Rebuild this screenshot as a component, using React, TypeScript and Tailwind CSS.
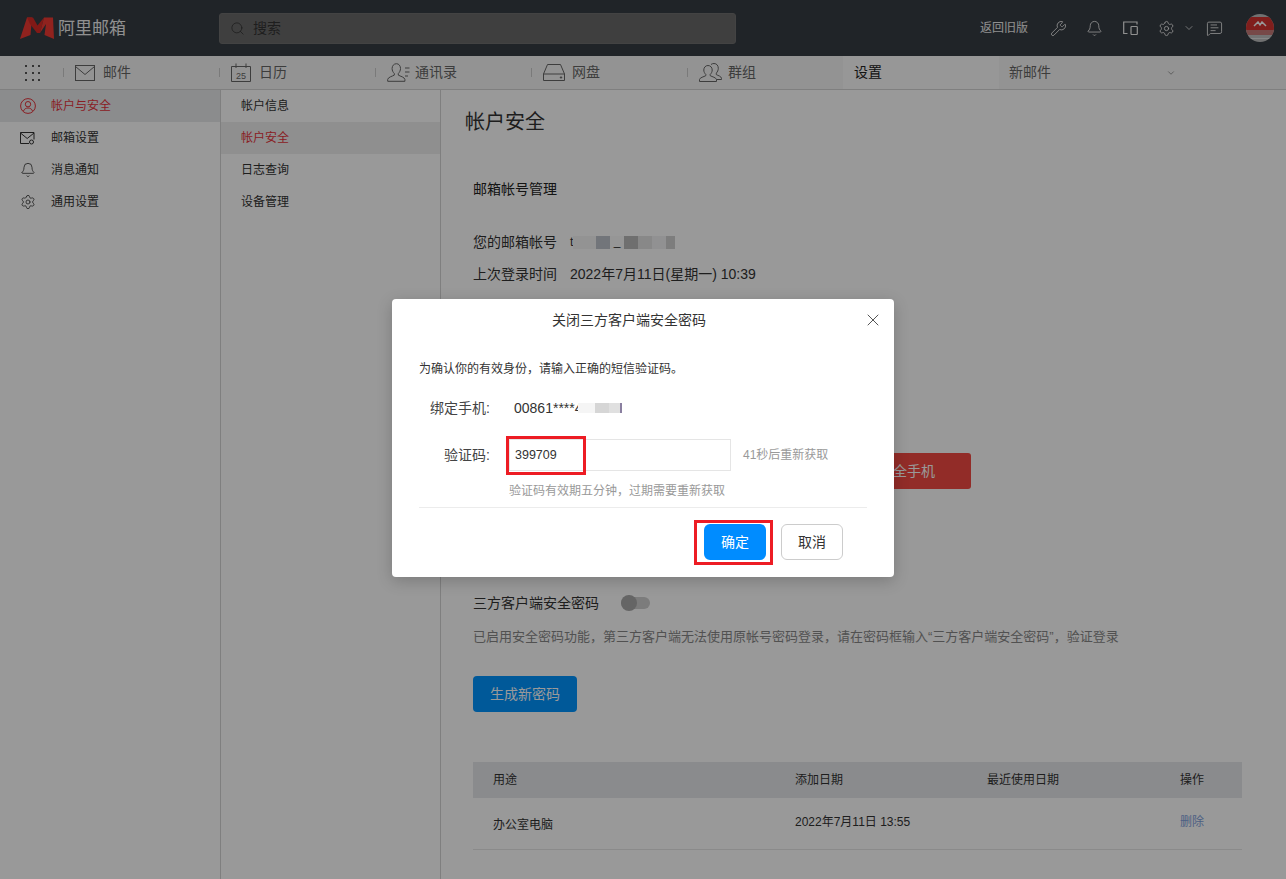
import React from "react";
import { Search, Wrench, Bell, Settings, ChevronDown, X, MessageSquareText } from "lucide-react";

const FONT = { fontFamily: '"Liberation Sans","Noto Sans CJK SC",sans-serif' };

function MailIcon() {
  return (
    <svg width="20" height="16" viewBox="0 0 20 16" fill="none" stroke="#666" strokeWidth="1">
      <rect x="0.5" y="0.5" width="19" height="15" />
      <path d="M0.5 1.5 L10 9.5 L19.5 1.5" />
    </svg>
  );
}
function CalIcon() {
  return (
    <svg width="20" height="19" viewBox="0 0 20 19" fill="none" stroke="#666" strokeWidth="1">
      <path d="M0.5 3.5H19.5V18.5H0.5Z" />
      <path d="M5 0.5V5M15 0.5V5" />
      <text x="10" y="15.500" textAnchor="middle" fontSize="9" fill="#666" stroke="none" style={FONT}>25</text>
    </svg>
  );
}
function ContactIcon() {
  return (
    <svg width="23" height="19" viewBox="0 0 23 19" fill="none" stroke="#666" strokeWidth="1">
      <path d="M9.5 0.7c-2.8 0-4.4 2.2-4.4 4.8 0 2 .9 3.8 2.2 5v1.6c-2 1.2-6.2 2-6.6 4.3v1.9h17.2v-1.9c-.4-2.3-4.6-3.1-6.6-4.3v-1.6c1.3-1.2 2.2-3 2.2-5 0-2.6-1.600-4.800-4-4.800z" />
      <path d="M18 5h4.500M18 9h4.500M18 13h3" />
    </svg>
  );
}
function DriveIcon() {
  return (
    <svg width="22" height="17" viewBox="0 0 22 17" fill="none" stroke="#666" strokeWidth="1">
      <path d="M4.500 0.500H17.500L21.500 10V16.500H0.500V10Z" />
      <path d="M0.500 10H21.500" />
      <circle cx="18" cy="13.500" r="0.700" fill="#666" />
    </svg>
  );
}
function GroupIcon() {
  return (
    <svg width="23" height="19" viewBox="0 0 23 19" fill="none" stroke="#666" strokeWidth="1">
      <path d="M12 1.500c1-.8 2-1 3-1 2.800 0 4.300 2.200 4.300 4.800 0 2-.9 3.600-2 4.800v1.500c1.800 1 5 1.700 5.200 3.700v1.200h-5" />
      <path d="M9 2.500c-2.500 0-4.200 2-4.200 4.500 0 1.800.8 3.300 2 4.400v1.300c-2 1.100-5.900 1.800-6.300 3.800v2h17v-2c-.4-2-4.300-2.700-6.300-3.800v-1.300c1.200-1.100 2-2.600 2-4.400 0-2.500-1.700-4.500-4.200-4.500z" />
    </svg>
  );
}
function DevicesIcon() {
  return (
    <svg width="15" height="14" viewBox="0 0 15 14" fill="none" stroke="#f0f0f0" strokeWidth="1.200">
      <path d="M4.500 12.500H.7V1H14V3.500" />
      <rect x="8" y="5.500" width="6.300" height="8" rx="0.800" />
    </svg>
  );
}
function UserCircleIcon() {
  return (
    <svg width="16" height="16" viewBox="0 0 16 16" fill="none" stroke="#e5343b" strokeWidth="1">
      <circle cx="8" cy="8" r="7.400" />
      <circle cx="8" cy="6.200" r="2.700" />
      <path d="M3.500 13c.6-2 2.500-3 4.500-3s3.900 1 4.500 3" />
    </svg>
  );
}
function MailSetIcon() {
  return (
    <svg width="15" height="13" viewBox="0 0 15 13" fill="none" stroke="#333" strokeWidth="1">
      <path d="M9 11.500H.5V.5H14V7.500" />
      <path d="M.5 1 L7.200 6.500 L14 1" />
      <circle cx="11.500" cy="10" r="2" fill="#fff" stroke="#333" />
    </svg>
  );
}

function Logo() {
  return (
    <svg width="34" height="23" viewBox="0 0 34 23">
      <path d="M0 22 L7 0.500 L12 0.500 L10.500 18 Z" fill="#f03a33" />
      <path d="M7 0.500 L13 0.500 L17.500 8.500 L24 0.500 L20 16 L17 16 L10 7 Z" fill="#d92a26" />
      <path d="M24 0.500 L33 0.500 L34 22 L24.500 18 L26 7 L20 16 Z" fill="#f03a33" />
    </svg>
  );
}

function Avatar() {
  return (
    <div className="relative w-[28px] h-[28px] rounded-full overflow-hidden bg-[#bdbdbd] flex flex-col">
      <div className="h-[13px] bg-[#d6332f] mt-[3px] flex justify-center items-center">
        <svg width="14" height="6" viewBox="0 0 14 6" fill="none" stroke="#fff" strokeWidth="1.500">
          <path d="M1 5 L5 1 L7 4 L9 1 L13 5" />
        </svg>
      </div>
      <div className="h-[5px] bg-[#c77b78]" />
      <div className="h-[3px] bg-[#c0c0c0]" />
      <div className="h-[1px] bg-[#e0e0e0]" />
    </div>
  );
}

function Tab({ icon, label, gap = "w-[28px]" }: { icon: React.ReactNode; label: string; gap?: string }) {
  return (
    <div className="w-[156px] h-full flex items-center">
      <div className="w-px h-[9px] bg-[#ccc] mr-[11px]" />
      <div className={`${gap} flex items-center shrink-0`}>{icon}</div>
      <span className="text-[14px] text-[#666]">{label}</span>
    </div>
  );
}

function Grid9() {
  return (
    <div className="grid grid-cols-3 gap-x-[5px] gap-y-[5px] ml-[25px] w-[15px]">
      {Array.from({ length: 9 }).map((_, i) => (
        <div key={i} className="w-[2px] h-[2px] bg-[#555]" />
      ))}
    </div>
  );
}

function SideItem({ icon, label, active }: { icon: React.ReactNode; label: string; active?: boolean }) {
  return (
    <div className={`h-8 flex items-center pl-[20px] text-[12px] ${active ? "bg-[#e8e9ec] text-[#e5343b]" : "text-[#333]"}`}>
      <div className="w-[31px] flex items-center">{icon}</div>
      <span>{label}</span>
    </div>
  );
}

function SubItem({ label, active }: { label: string; active?: boolean }) {
  return (
    <div className={`h-8 flex items-center pl-[20px] text-[12px] ${active ? "bg-[#eeeeee] text-[#e5343b]" : "text-[#333]"}`}>
      {label}
    </div>
  );
}

export default function App() {
  return (
    <div style={FONT} className="relative w-full h-[879px] overflow-hidden bg-white flex flex-col">
      {/* Header */}
      <header className="h-14 bg-[#363c43] flex items-center shrink-0">
        <div className="w-[219px] flex items-center pl-[20px] gap-[4px]">
          <Logo />
          <span className="text-[17px] leading-none text-[#f0f0f0]">阿里邮箱</span>
        </div>
        <div className="w-[517px] h-[31px] rounded-[3px] bg-[#6a6a6a] border border-[#707070] flex items-center pl-[10px] gap-[8px]">
          <Search size={15} strokeWidth={1.2} className="text-[#2e2e2e]" />
          <span className="text-[14px] text-[#333]">搜索</span>
        </div>
        <div className="ml-auto flex items-center text-[#f0f0f0]">
          <span className="text-[12px] mr-[22px]">返回旧版</span>
          <Wrench size={17} strokeWidth={1.200} className="mr-[19px]" />
          <Bell size={17} strokeWidth={1.200} className="mr-[20px]" />
          <div className="mr-[20px]"><DevicesIcon /></div>
          <Settings size={17} strokeWidth={1.200} className="mr-[8px]" />
          <ChevronDown size={12} strokeWidth={1.500} className="mr-[11px]" />
          <MessageSquareText size={17} strokeWidth={1.200} className="mr-[23px]" />
          <div className="mr-[12px]"><Avatar /></div>
        </div>
      </header>

      {/* Nav */}
      <nav className="h-[34px] shrink-0 bg-[#f6f6f6] border-b border-[#d4d4d4] flex items-center">
        <div className="w-[63px]"><Grid9 /></div>
        <Tab icon={<MailIcon />} label="邮件" />
        <Tab icon={<CalIcon />} label="日历" />
        <Tab icon={<ContactIcon />} label="通讯录" />
        <Tab icon={<DriveIcon />} label="网盘" gap="w-[29px]" />
        <Tab icon={<GroupIcon />} label="群组" gap="w-[29px]" />
        <div className="w-[156px] h-full bg-[#fcfcfc] flex items-center pl-[11px] text-[14px] text-[#222]">设置</div>
        <div className="w-[187px] h-full flex items-center justify-between pl-[10px] pr-[10px] text-[14px] text-[#666]">
          <span>新邮件</span>
          <ChevronDown size={10} strokeWidth={1.500} />
        </div>
      </nav>

      {/* Body */}
      <div className="flex flex-1 min-h-0">
        <aside className="w-[221px] shrink-0 border-r border-[#d4d4d4]">
          <SideItem active icon={<UserCircleIcon />} label="帐户与安全" />
          <SideItem icon={<MailSetIcon />} label="邮箱设置" />
          <SideItem icon={<Bell size={16} strokeWidth={1.200} className="text-[#333]" />} label="消息通知" />
          <SideItem icon={<Settings size={16} strokeWidth={1.200} className="text-[#333]" />} label="通用设置" />
        </aside>
        <aside className="w-[220px] shrink-0 border-r border-[#d4d4d4]">
          <SubItem label="帐户信息" />
          <SubItem active label="帐户安全" />
          <SubItem label="日志查询" />
          <SubItem label="设备管理" />
        </aside>
        <main className="flex-1 min-w-0 pl-[24px] pr-[44px] text-[#333]">
          <h1 className="text-[20px] leading-[28px] mt-[18px] font-normal text-[#333]">帐户安全</h1>
          <div className="pl-[8px]">
            <div className="text-[14px] leading-[20px] mt-[43px] text-[#222]">邮箱帐号管理</div>
            <div className="flex items-center text-[14px] leading-[20px] mt-[33px]">
              <span className="w-[97px]">您的邮箱帐号</span>
              <span className="relative flex items-center h-[13px]">
                <span className="w-[3px] text-[12px] leading-none">t</span>
                <span className="w-[23px] h-[13px] bg-[#f5f5f6]" />
                <span className="w-[14px] h-[13px] bg-[#bec3cb]" />
                <span className="w-[14px] h-[13px] bg-[#fafafa] text-[12px] leading-[10px] text-center">_</span>
                <span className="w-[14px] h-[13px] bg-[#b9b9b9]" />
                <span className="w-[14px] h-[13px] bg-[#e3e3e3]" />
                <span className="w-[14px] h-[13px] bg-[#f2f2f4]" />
                <span className="w-[9px] h-[13px] bg-[#d0d0d0]" />
              </span>
            </div>
            <div className="flex items-center text-[14px] leading-[20px] mt-[12px]">
              <span className="w-[97px]">上次登录时间</span>
              <span>2022年7月11日(星期一) 10:39</span>
            </div>
            <button className="block ml-[342px] mt-[169px] w-[156px] h-[36px] rounded-[3px] bg-[#f44a43] text-white text-[14px]">
              修改安全手机
            </button>
            <div className="flex items-center text-[14px] leading-[20px] mt-[104px]">
              <span className="mr-[22px]">三方客户端安全密码</span>
              <span className="relative block w-[29px] h-[12px] rounded-full bg-[#cfcfcf]">
                <span className="absolute left-0 -top-[2px] w-[16px] h-[16px] rounded-full bg-[#a8a8a8]" />
              </span>
            </div>
            <p className="text-[13px] leading-[20px] mt-[14px] text-[#888]">
              已启用安全密码功能，第三方客户端无法使用原帐号密码登录，请在密码框输入“三方客户端安全密码”，验证登录
            </p>
            <button className="block mt-[29px] w-[104px] h-[36px] rounded-[4px] bg-[#0094ff] text-white text-[14px]">
              生成新密码
            </button>
            <div className="mt-[50px]">
              <div className="h-[36px] bg-[#e6e8eb] grid grid-cols-[322px_192px_193px_1fr] items-center text-[12px] text-[#333]">
                <span className="pl-[20px]">用途</span>
                <span>添加日期</span>
                <span>最近使用日期</span>
                <span>操作</span>
              </div>
              <div className="h-[52px] border-b border-[#e6e6e6] grid grid-cols-[322px_192px_193px_1fr] items-center text-[12px] text-[#333]">
                <span className="pl-[20px] pt-[3px]">办公室电脑</span>
                <span className="-mt-[3px]">2022年7月11日 13:55</span>
                <span />
                <span className="-mt-[3px] text-[#7f9fdc]">删除</span>
              </div>
            </div>
          </div>
        </main>
      </div>

      {/* Overlay + dialog */}
      <div className="absolute inset-0 bg-black/40 flex items-center justify-center pb-[3px]">
        <div className="relative w-[502px] h-[278px] bg-white rounded-[4px] shadow-[0_4px_16px_rgba(0,0,0,0.2)] px-[27px] text-[#333]">
          <div className="h-[42px] flex items-center justify-center pr-[28px] text-[14px] text-[#333]">关闭三方客户端安全密码</div>
          <X size={20} strokeWidth={1.100} className="absolute right-[11px] top-[11px] text-[#444]" />
          <p className="text-[12px] leading-[18px] mt-[19px] text-[#333]">为确认你的有效身份，请输入正确的短信验证码。</p>
          <div className="flex items-center h-[20px] mt-[20px] text-[14px]">
            <span className="w-[72px] pr-[1px] text-right text-[#444]">绑定手机:</span>
            <span className="ml-[23px] text-[#333]">00861****4</span>
            <span className="w-[17px] h-[10px] -ml-[5px] bg-[#f5f5f5]" />
            <span className="w-[14px] h-[10px] bg-[#d6d6d6]" />
            <span className="w-[11px] h-[10px] bg-[#e0e0e0]" />
            <span className="w-[2px] h-[10px] bg-[#8a7fa0]" />
          </div>
          <div className="flex items-center h-[32px] mt-[21px]">
            <span className="w-[72px] pr-[1px] text-right text-[14px] text-[#444]">验证码:</span>
            <div className="ml-[18px] w-[222px] h-[32px] border border-[#e5e5e5] flex items-center pl-[5px] text-[12.500px] text-[#333]">399709</div>
            <span className="ml-[12px] text-[12px] text-[#999]">41秒后重新获取</span>
          </div>
          <div className="text-[12px] leading-[16px] mt-[12px] ml-[90px] text-[#999]">验证码有效期五分钟，过期需要重新获取</div>
          <div className="h-px bg-[#ececec] mt-[8px]" />
          <div className="flex justify-end gap-[15px] mt-[16px] pr-[24px]">
            <button className="w-[62px] h-[36px] rounded-[6px] bg-[#008cff] text-white text-[14px]">确定</button>
            <button className="w-[62px] h-[36px] rounded-[6px] border border-[#ccc] bg-white text-[#333] text-[14px]">取消</button>
          </div>
          {/* Red annotation boxes */}
          <div className="absolute left-[114px] top-[137px] w-[80px] h-[39px] border-[3px] border-[#ed1c24]" />
          <div className="absolute left-[302px] top-[221px] w-[79px] h-[45px] border-[3px] border-[#ed1c24]" />
        </div>
      </div>
    </div>
  );
}
